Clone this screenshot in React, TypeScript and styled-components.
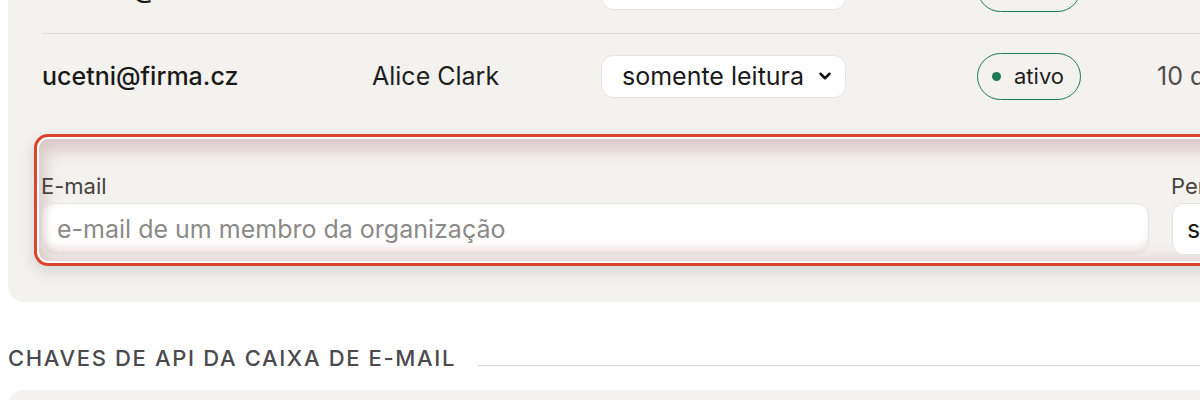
import React from "react";
import styled, { createGlobalStyle } from "styled-components";
import { ChevronDown } from "lucide-react";

const GlobalStyle = createGlobalStyle`
    html, body {
        margin: 0;
        padding: 0;
        background: #ffffff;
        font-family: Inter, "Noto Sans", "Liberation Sans", sans-serif;
        color: #1c1b1a;
    }
`

type Member = {
    email: string;
    name: string;
    role: string;
    status: string;
    added: string;
};

const members: Member[] = [
    { email: "martina@firma.cz", name: "Bob Smith", role: "administrador", status: "ativo", added: "12 dias" },
    { email: "ucetni@firma.cz", name: "Alice Clark", role: "somente leitura", status: "ativo", added: "10 dias" },
];

const App = () => {
    return (
        <>
            <GlobalStyle />
            <Page>
                <Card>
                    {
                        members.map((m, key) => (
                            <Row key={key} first={key === 0}>
                                <Email>{m.email}</Email>
                                <Name>{m.name}</Name>
                                <SelectWrap>
                                    <Select defaultValue={m.role}>
                                        <option value="administrador">administrador</option>
                                        <option value="somente leitura">somente leitura</option>
                                    </Select>
                                    <Chevron><ChevronDown size={18} strokeWidth={3.4} /></Chevron>
                                </SelectWrap>
                                <Badge><Dot />{m.status}</Badge>
                                <Added>{m.added}</Added>
                            </Row>
                        ))
                    }
                    <InviteForm>
                        <FieldGrid>
                            <Field>
                                <Label>E-mail</Label>
                                <TextInput placeholder="e-mail de um membro da organização" />
                            </Field>
                            <Field>
                                <Label>Permissão</Label>
                                <SmallSelect defaultValue="somente leitura">
                                    <option value="somente leitura">somente leitura</option>
                                </SmallSelect>
                            </Field>
                        </FieldGrid>
                    </InviteForm>
                </Card>
                <SectionHeading>
                    <SectionTitle>Chaves de API da caixa de e-mail</SectionTitle>
                    <SectionLine />
                </SectionHeading>
                <NextCard />
            </Page>
        </>
    )
}

const Page = styled.div`
    width: 1200px;
    height: 400px;
    overflow: hidden;
    padding-left: 8px;
    box-sizing: border-box;
`
const Card = styled.div`
    width: 1400px;
    margin-top: -52px;
    background: #f3f2ef;
    border-radius: 16px;
    padding: 0 0 36px 26px;
    box-sizing: border-box;
`
const Row = styled.div<{ first: boolean }>`
    display: grid;
    grid-template-columns: 330px 229px 376px 180px 1fr;
    align-items: center;
    height: 85px;
    margin-left: 8px;
    padding-bottom: ${({ first }) => first ? "4px" : "0"};
    border-top: ${({ first }) => first ? "none" : "1px solid #e0ddd8"};
    box-sizing: border-box;
    font-size: 25px;
`
const Email = styled.div`
    font-weight: 500;
    color: #1b1a19;
`
const Name = styled.div`
    color: #1f1e1d;
`
const SelectWrap = styled.div`
    position: relative;
    width: 245px;
`
const Select = styled.select`
    appearance: none;
    width: 245px;
    height: 43px;
    border: 1px solid #e7e4df;
    border-radius: 12px;
    background: #ffffff;
    padding: 0 0 0 20px;
    font-family: inherit;
    font-size: 25px;
    color: #1b1a19;
`
const Chevron = styled.span`
    position: absolute;
    right: 12px;
    top: 12px;
    display: flex;
    color: #161616;
    pointer-events: none;
`
const Badge = styled.div`
    display: inline-flex;
    align-items: center;
    justify-self: start;
    gap: 13px;
    height: 47px;
    padding: 0 16px 0 14px;
    border: 1.5px solid #1f7a57;
    border-radius: 999px;
    box-sizing: border-box;
    font-size: 22px;
    color: #1f1e1d;
`
const Dot = styled.span`
    width: 9px;
    height: 9px;
    border-radius: 50%;
    background: #1b7a55;
`
const Added = styled.div`
    color: #4f4d4b;
    white-space: nowrap;
`
const InviteForm = styled.div`
    margin-top: 16px;
    height: 132px;
    border: 3px solid #d9462f;
    border-radius: 14px;
    padding: 36px 0 0 5px;
    box-sizing: border-box;
    box-shadow:
        0 6px 16px rgba(0, 0, 0, 0.13),
        inset 0 0 0 2px #ffffff,
        inset 0 5px 16px 8px rgba(168, 120, 114, 0.34);
`
const FieldGrid = styled.div`
    display: grid;
    grid-template-columns: 1107px 300px;
    gap: 23px;
`
const Field = styled.div`
    display: flex;
    flex-direction: column;
    gap: 4px;
`
const Label = styled.label`
    font-size: 22px;
    line-height: 26px;
    color: #47433f;
    margin-left: -1px;
`
const TextInput = styled.input`
    height: 52px;
    border: 1px solid #e6e2de;
    border-radius: 12px;
    background: #ffffff;
    padding: 0 14px;
    box-sizing: border-box;
    font-family: inherit;
    font-size: 25px;
    color: #1b1a19;
    box-shadow:
        inset 0 -10px 12px -6px rgba(190, 148, 142, 0.4),
        inset 8px 0 10px -6px rgba(190, 148, 142, 0.35);
    &::placeholder {
        color: #8c8a88;
    }
`
const SmallSelect = styled.select`
    appearance: none;
    height: 52px;
    border: 1px solid #e6e2de;
    border-radius: 12px;
    background: #ffffff;
    padding: 0 14px;
    font-family: inherit;
    font-size: 25px;
    color: #1b1a19;
`
const SectionHeading = styled.div`
    display: flex;
    align-items: flex-end;
    gap: 22px;
    margin-top: 43px;
`
const SectionTitle = styled.h2`
    margin: 0;
    font-size: 22px;
    line-height: 26px;
    font-weight: 500;
    letter-spacing: 1.65px;
    text-transform: uppercase;
    color: #4b4a4f;
    white-space: nowrap;
`
const SectionLine = styled.div`
    flex: 1;
    height: 1px;
    background: #d8d6d3;
    margin-bottom: 5px;
`
const NextCard = styled.div`
    margin-top: 19px;
    width: 1400px;
    height: 120px;
    background: #f3f2ef;
    border-radius: 16px;
`

export default App;
